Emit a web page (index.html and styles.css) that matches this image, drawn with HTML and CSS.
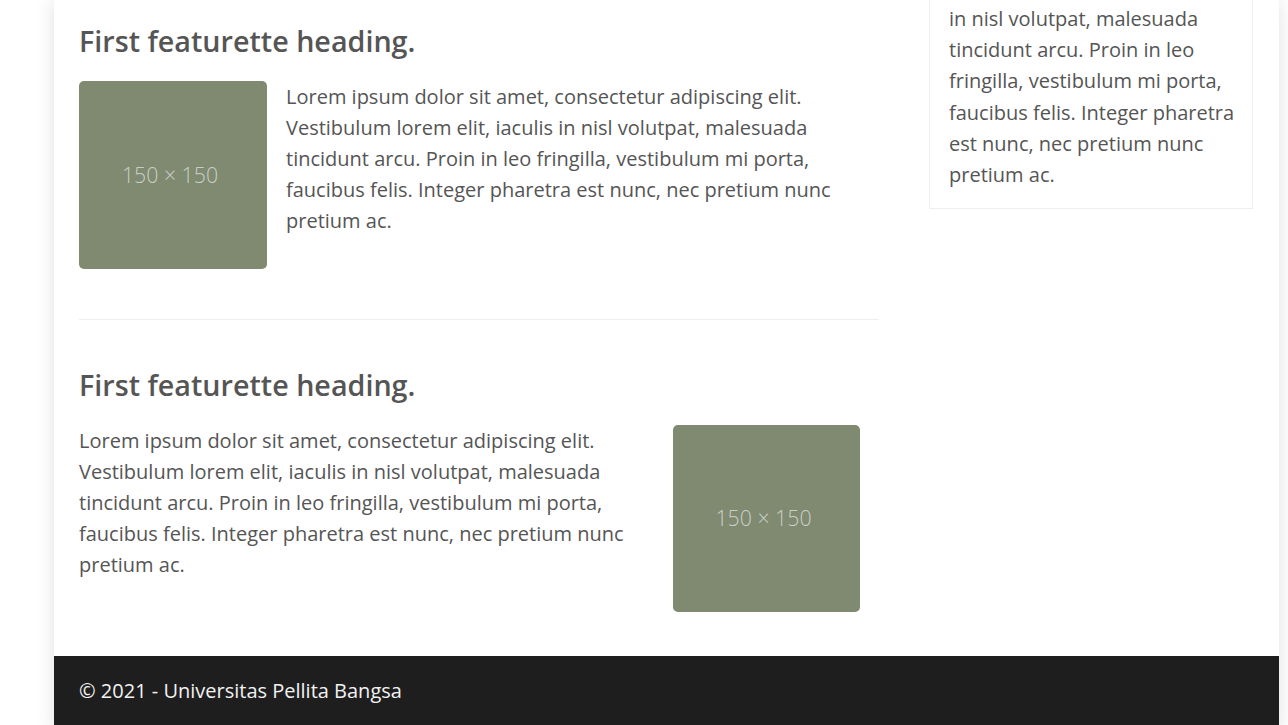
FILE: index.html
```html
<!DOCTYPE html>
<html lang="en">
<head>
<meta charset="utf-8">
<title>Universitas Pellita Bangsa</title>
<link rel="stylesheet" href="styles.css">
</head>
<body>
<div class="page">
  <div class="content">
    <main class="main">
      <section class="featurette">
        <h2 class="feat-heading">First featurette heading.</h2>
        <div class="feat-body">
          <div class="placeholder">150 × 150</div>
          <p class="feat-text">Lorem ipsum dolor sit amet, consectetur adipiscing elit. Vestibulum lorem elit, iaculis in nisl volutpat, malesuada tincidunt arcu. Proin in leo fringilla, vestibulum mi porta, faucibus felis. Integer pharetra est nunc, nec pretium nunc pretium ac.</p>
        </div>
      </section>
      <hr class="divider">
      <section class="featurette">
        <h2 class="feat-heading">First featurette heading.</h2>
        <div class="feat-body reverse">
          <p class="feat-text">Lorem ipsum dolor sit amet, consectetur adipiscing elit. Vestibulum lorem elit, iaculis in nisl volutpat, malesuada tincidunt arcu. Proin in leo fringilla, vestibulum mi porta, faucibus felis. Integer pharetra est nunc, nec pretium nunc pretium ac.</p>
          <div class="placeholder">150 × 150</div>
        </div>
      </section>
    </main>
    <aside class="sidebar">
      <div class="side-box">
        <p class="side-text">in nisl volutpat, malesuada tincidunt arcu. Proin in leo fringilla, vestibulum mi porta, faucibus felis. Integer pharetra est nunc, nec pretium nunc pretium ac.</p>
      </div>
    </aside>
  </div>
  <footer class="footer">© 2021 - Universitas Pellita Bangsa</footer>
</div>
</body>
</html>
```
FILE: styles.css
```css
html, body {
  margin: 0;
  padding: 0;
}
body {
  background: #ffffff;
  font-family: "Open Sans", "Noto Sans", sans-serif;
  color: #555555;
  overflow: hidden;
}
.page {
  margin-left: 54px;
  width: 1225px;
  background: #ffffff;
  box-shadow: 0 0 18px rgba(0, 0, 0, 0.12);
}
.content {
  display: flex;
  padding: 0 25px;
  gap: 50px;
}
.main {
  width: 800px;
  padding-top: 23px;
}
.featurette {
  display: flex;
  flex-direction: column;
}
.feat-heading {
  margin: 0 0 22px;
  font-size: 28.7px;
  font-weight: 600;
  line-height: 36px;
  color: #555555;
}
.feat-body {
  display: flex;
  align-items: flex-start;
  gap: 19px;
}
.feat-body.reverse {
  gap: 49px;
  padding-right: 19px;
}
.feat-text {
  margin: 0;
  font-size: 20px;
  line-height: 31.2px;
  flex: 1;
  margin-top: -0.5px;
}
.placeholder {
  flex: 0 0 188px;
  height: 188px;
  box-sizing: border-box;
  padding: 0 6px 2px 0;
  border-radius: 5px;
  background: #7f8a70;
  color: #c9cec8;
  font-size: 21.3px;
  font-weight: 300;
  display: flex;
  align-items: center;
  justify-content: center;
}
.reverse .placeholder {
  flex-basis: 187px;
  height: 187px;
}
.divider {
  border: 0;
  border-top: 1px solid #eeeeee;
  margin: 50px 0 47px;
}
.sidebar {
  width: 324px;
}
.side-box {
  border: 1px solid #eeeeee;
  border-top: 0;
  padding: 3px 15px 18px 19px;
}
.side-text {
  margin: 0;
  font-size: 20px;
  line-height: 31.2px;
}
.footer {
  margin-top: 44px;
  background: #1e1e1e;
  color: #f2f2f2;
  font-size: 20px;
  line-height: 28px;
  padding: 21px 25px 29px;
}
```
